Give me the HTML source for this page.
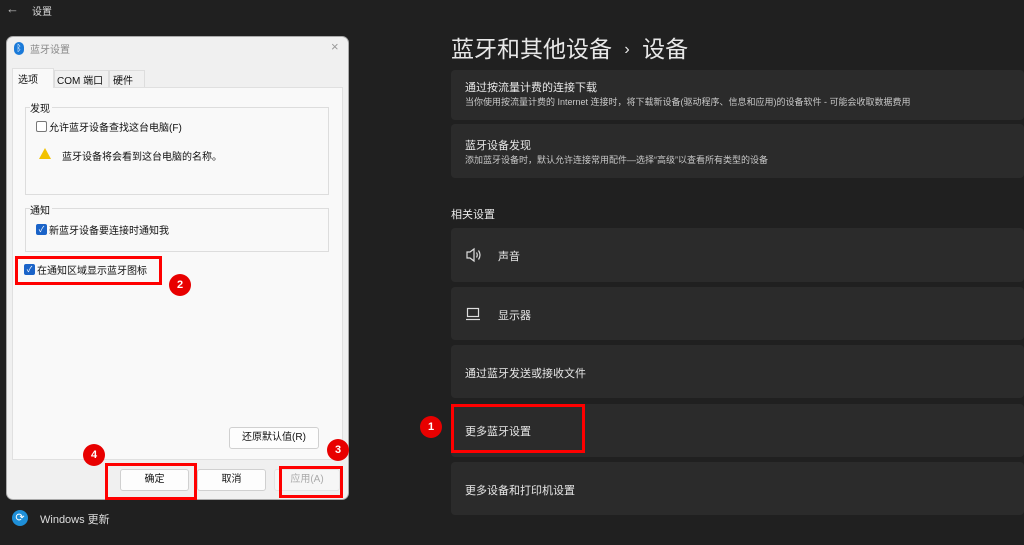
<!DOCTYPE html>
<html><head><meta charset="utf-8"><style>
*{margin:0;padding:0;box-sizing:border-box}
body{width:1024px;height:545px;background:#202020;position:relative;overflow:hidden;font-family:"Liberation Sans","Noto Sans CJK SC",sans-serif;color:#fff}
.a{position:absolute}
.card{position:absolute;left:451px;width:573px;background:#2b2b2b;border-radius:4px}
.ct{position:absolute;left:14px;font-size:11px;color:#e8e8e8}
.red{position:absolute;border:3px solid #f00}
.num{position:absolute;width:22px;height:22px;border-radius:50%;background:#e80000;color:#fff;font-size:11px;font-weight:bold;text-align:center;line-height:22px}
.dt{font-size:10px;color:#111}
.cb{position:absolute;width:11px;height:11px;border-radius:2px;color:#fff;font-size:8px;line-height:11px;text-align:center}
.btn{position:absolute;height:22px;background:#fdfdfd;border:1px solid #d0d0d0;border-radius:3px;font-size:10px;color:#111;text-align:center;line-height:20px}
</style></head><body>
<div class="a" style="left:6px;top:1px;font-size:13px;color:#bbb">←</div>
<div class="a" style="left:32px;top:3px;font-size:10px;color:#ddd">设置</div>

<div class="a" style="left:451px;top:30px;font-size:23px;color:#e8e8e8">蓝牙和其他设备 <span style="font-size:16px;position:relative;top:-3px;margin:0 6px">›</span> 设备</div>

<div class="card" style="top:70px;height:50px"><div class="ct" style="top:9px">通过按流量计费的连接下载</div><div class="ct" style="top:25px;font-size:9px;color:#c8c8c8">当你使用按流量计费的 Internet 连接时，将下载新设备(驱动程序、信息和应用)的设备软件 - 可能会收取数据费用</div></div>
<div class="card" style="top:124px;height:54px"><div class="ct" style="top:13px">蓝牙设备发现</div><div class="ct" style="top:29px;font-size:9px;color:#c8c8c8">添加蓝牙设备时，默认允许连接常用配件—选择“高级”以查看所有类型的设备</div></div>
<div class="a" style="left:451px;top:206px;font-size:11px;color:#e8e8e8">相关设置</div>
<div class="card" style="top:228px;height:54px">
<svg class="a" style="left:14px;top:19px" width="18" height="16" viewBox="0 0 18 16" fill="none" stroke="#ddd" stroke-width="1.2"><path d="M2 5h3l4-3v12l-4-3H2z"/><path d="M11.5 5.5q1.5 2.5 0 5M13.5 3.5q3 4.5 0 9"/></svg>
<div class="ct" style="left:47px;top:20px">声音</div></div>
<div class="card" style="top:287px;height:53px">
<svg class="a" style="left:14px;top:20px" width="16" height="14" viewBox="0 0 16 14" fill="none" stroke="#ddd" stroke-width="1.2"><rect x="2.5" y="1.5" width="11" height="8"/><path d="M1 12.5h14"/></svg>
<div class="ct" style="left:47px;top:20px">显示器</div></div>
<div class="card" style="top:345px;height:53px"><div class="ct" style="top:20px">通过蓝牙发送或接收文件</div></div>
<div class="card" style="top:404px;height:53px"><div class="ct" style="top:19px">更多蓝牙设置</div></div>
<div class="card" style="top:462px;height:53px"><div class="ct" style="top:20px">更多设备和打印机设置</div></div>
<div class="red" style="left:451px;top:404px;width:134px;height:49px"></div>
<div class="num" style="left:420px;top:416px">1</div>

<!-- dialog -->
<div class="a" style="left:6px;top:36px;width:343px;height:464px;background:#f0f0f0;border-radius:7px;border:1px solid #aaa"></div>
<div class="a" style="left:14px;top:42px;width:10px;height:13px;border-radius:5px;background:#1a7ad9;color:#fff;font-size:9px;text-align:center;line-height:13px">ᛒ</div>
<div class="a" style="left:30px;top:41px;font-size:10px;color:#888">蓝牙设置</div>
<div class="a" style="left:331px;top:39px;font-size:13px;color:#999">×</div>
<div class="a" style="left:12px;top:87px;width:331px;height:373px;background:#f9f9f9;border:1px solid #e0e0e0"></div>
<div class="a" style="left:12px;top:68px;width:42px;height:20px;background:#f9f9f9;border:1px solid #e0e0e0;border-bottom:none"></div>
<div class="a dt" style="left:18px;top:71px">选项</div>
<div class="a" style="left:54px;top:70px;width:55px;height:17px;border:1px solid #ddd;border-bottom:none"></div>
<div class="a dt" style="left:57px;top:72px">COM 端口</div>
<div class="a" style="left:109px;top:70px;width:36px;height:17px;border:1px solid #ddd;border-bottom:none"></div>
<div class="a dt" style="left:113px;top:72px">硬件</div>

<div class="a" style="left:25px;top:107px;width:304px;height:88px;border:1px solid #ddd"></div>
<div class="a dt" style="left:30px;top:100px;background:#f9f9f9;padding-right:2px">发现</div>
<div class="cb" style="left:36px;top:121px;border:1px solid #777;background:#fff"></div>
<div class="a dt" style="left:49px;top:119px">允许蓝牙设备查找这台电脑(F)</div>
<div class="a" style="left:39px;top:148px;width:0;height:0;border-left:6px solid transparent;border-right:6px solid transparent;border-bottom:11px solid #f2c200"></div>
<div class="a dt" style="left:62px;top:148px">蓝牙设备将会看到这台电脑的名称。</div>

<div class="a" style="left:25px;top:208px;width:304px;height:44px;border:1px solid #ddd"></div>
<div class="a dt" style="left:30px;top:202px;background:#f9f9f9;padding-right:2px">通知</div>
<div class="cb" style="left:36px;top:224px;background:#1a63c8">✓</div>
<div class="a dt" style="left:49px;top:222px">新蓝牙设备要连接时通知我</div>
<div class="cb" style="left:24px;top:264px;background:#1a63c8">✓</div>
<div class="a dt" style="left:37px;top:262px">在通知区域显示蓝牙图标</div>
<div class="red" style="left:15px;top:256px;width:147px;height:29px"></div>
<div class="num" style="left:169px;top:274px">2</div>

<div class="btn" style="left:229px;top:427px;width:90px">还原默认值(R)</div>
<div class="btn" style="left:120px;top:469px;width:69px">确定</div>
<div class="btn" style="left:197px;top:469px;width:69px">取消</div>
<div class="btn" style="left:274px;top:469px;width:66px;color:#aaa;background:#f6f6f6;border-color:#e4e4e4">应用(A)</div>
<div class="red" style="left:105px;top:463px;width:92px;height:37px"></div>
<div class="red" style="left:279px;top:466px;width:64px;height:32px"></div>
<div class="num" style="left:83px;top:444px">4</div>
<div class="num" style="left:327px;top:439px">3</div>

<div class="a" style="left:12px;top:510px;width:16px;height:16px;border-radius:50%;background:#1e8fd8;color:#fff;font-size:11px;text-align:center;line-height:16px">⟳</div>
<div class="a" style="left:40px;top:511px;font-size:11px;color:#ddd">Windows 更新</div>
</body></html>
